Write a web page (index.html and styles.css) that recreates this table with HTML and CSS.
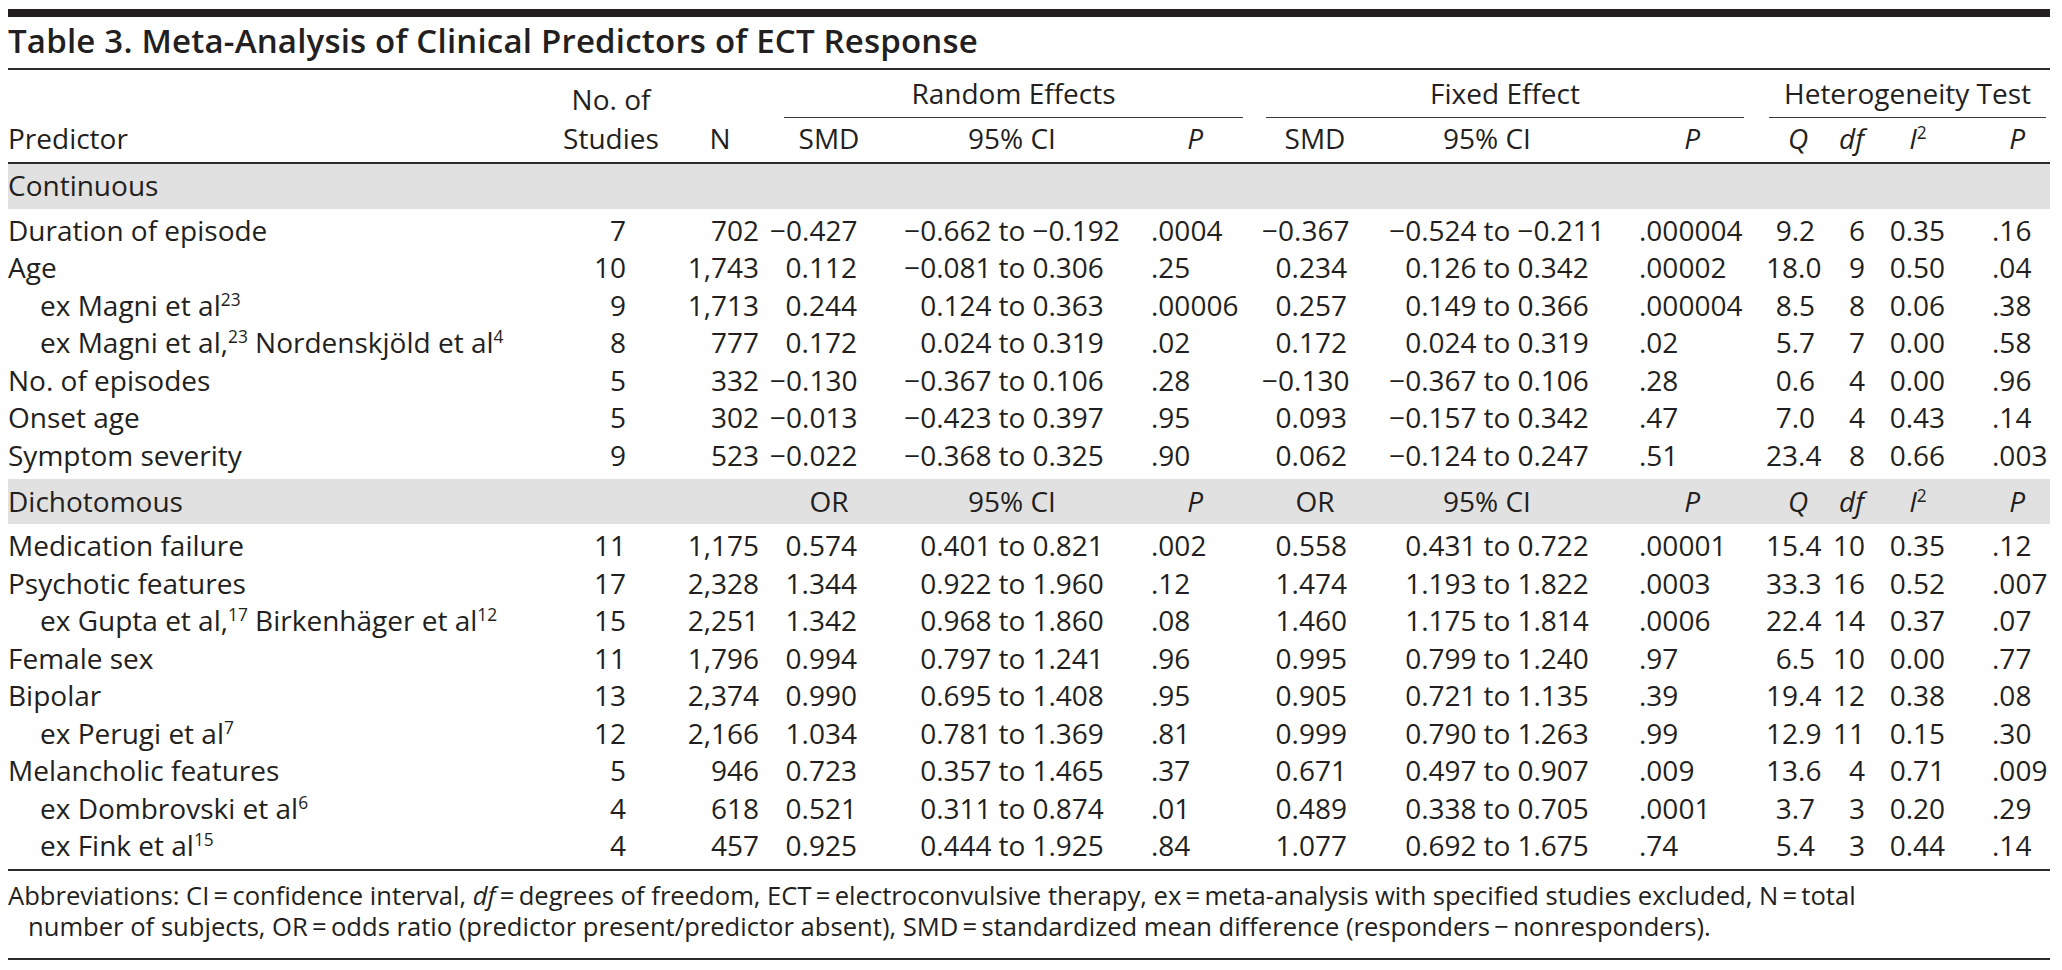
FILE: index.html
```html
<!DOCTYPE html>
<html lang="en">
<head>
<meta charset="utf-8">
<title>Table 3. Meta-Analysis of Clinical Predictors of ECT Response</title>
<link rel="stylesheet" href="styles.css">
</head>
<body>
<div class="page">
  <div class="bar"></div>
  <h1 class="title">Table 3. Meta-Analysis of Clinical Predictors of ECT Response</h1>
  <table class="meta">
    <colgroup>
      <col class="w-pred"><col class="w-stud"><col class="w-n">
      <col class="w-smd1"><col class="w-ci1"><col class="w-p1"><col class="w-gap1">
      <col class="w-smd2"><col class="w-ci2"><col class="w-p2"><col class="w-gap2">
      <col class="w-q"><col class="w-df"><col class="w-i2"><col class="w-p3">
    </colgroup>
    <thead>
      <tr class="h1">
        <th rowspan="2" class="hpred">Predictor</th>
        <th rowspan="2" class="hstud">No. of<br>Studies</th>
        <th rowspan="2" class="hn">N</th>
        <th colspan="3" class="grp"><div class="grp-l g-rand">Random Effects</div></th>
        <th rowspan="2" class="hgap"></th>
        <th colspan="3" class="grp"><div class="grp-l g-fix">Fixed Effect</div></th>
        <th rowspan="2" class="hgap"></th>
        <th colspan="4" class="grp"><div class="grp-l g-het">Heterogeneity Test</div></th>
      </tr>
      <tr class="h2">
        <th class="hc">SMD</th><th class="hc">95% CI</th><th class="hp1"><i>P</i></th>
        <th class="hc">SMD</th><th class="hc hci2">95% CI</th><th class="hp2"><i>P</i></th>
        <th class="hc"><i>Q</i></th><th class="hdf"><i>df</i></th><th class="hc"><i>I</i><sup>2</sup></th><th class="hp3"><i>P</i></th>
      </tr>
    </thead>
    <tbody>
      <tr class="band">
        <td class="pred">Continuous</td><td></td><td></td><td></td><td></td><td></td><td></td><td></td><td></td><td></td><td></td><td></td><td></td><td></td><td></td>
      </tr>
      <tr class="first">
        <td class="pred">Duration of episode</td><td class="st">7</td><td class="n">702</td>
        <td class="e1">−0.427</td><td class="ci"><div class="cig"><span class="lo">−0.662</span><span>to</span><span class="hi">−0.192</span></div></td><td class="p1">.0004</td><td></td>
        <td class="e2">−0.367</td><td class="ci ci2"><div class="cig"><span class="lo">−0.524</span><span>to</span><span class="hi">−0.211</span></div></td><td class="p2">.000004</td><td></td>
        <td class="q">9.2</td><td class="df">6</td><td class="i2">0.35</td><td class="p3">.16</td>
      </tr>
      <tr>
        <td class="pred">Age</td><td class="st">10</td><td class="n">1,743</td>
        <td class="e1">0.112</td><td class="ci"><div class="cig"><span class="lo">−0.081</span><span>to</span><span class="hi">0.306</span></div></td><td class="p1">.25</td><td></td>
        <td class="e2">0.234</td><td class="ci ci2"><div class="cig"><span class="lo">0.126</span><span>to</span><span class="hi">0.342</span></div></td><td class="p2">.00002</td><td></td>
        <td class="q">18.0</td><td class="df">9</td><td class="i2">0.50</td><td class="p3">.04</td>
      </tr>
      <tr>
        <td class="pred sub">ex Magni et al<sup>23</sup></td><td class="st">9</td><td class="n">1,713</td>
        <td class="e1">0.244</td><td class="ci"><div class="cig"><span class="lo">0.124</span><span>to</span><span class="hi">0.363</span></div></td><td class="p1">.00006</td><td></td>
        <td class="e2">0.257</td><td class="ci ci2"><div class="cig"><span class="lo">0.149</span><span>to</span><span class="hi">0.366</span></div></td><td class="p2">.000004</td><td></td>
        <td class="q">8.5</td><td class="df">8</td><td class="i2">0.06</td><td class="p3">.38</td>
      </tr>
      <tr>
        <td class="pred sub">ex Magni et al,<sup>23</sup> Nordenskjöld et al<sup>4</sup></td><td class="st">8</td><td class="n">777</td>
        <td class="e1">0.172</td><td class="ci"><div class="cig"><span class="lo">0.024</span><span>to</span><span class="hi">0.319</span></div></td><td class="p1">.02</td><td></td>
        <td class="e2">0.172</td><td class="ci ci2"><div class="cig"><span class="lo">0.024</span><span>to</span><span class="hi">0.319</span></div></td><td class="p2">.02</td><td></td>
        <td class="q">5.7</td><td class="df">7</td><td class="i2">0.00</td><td class="p3">.58</td>
      </tr>
      <tr>
        <td class="pred">No. of episodes</td><td class="st">5</td><td class="n">332</td>
        <td class="e1">−0.130</td><td class="ci"><div class="cig"><span class="lo">−0.367</span><span>to</span><span class="hi">0.106</span></div></td><td class="p1">.28</td><td></td>
        <td class="e2">−0.130</td><td class="ci ci2"><div class="cig"><span class="lo">−0.367</span><span>to</span><span class="hi">0.106</span></div></td><td class="p2">.28</td><td></td>
        <td class="q">0.6</td><td class="df">4</td><td class="i2">0.00</td><td class="p3">.96</td>
      </tr>
      <tr>
        <td class="pred">Onset age</td><td class="st">5</td><td class="n">302</td>
        <td class="e1">−0.013</td><td class="ci"><div class="cig"><span class="lo">−0.423</span><span>to</span><span class="hi">0.397</span></div></td><td class="p1">.95</td><td></td>
        <td class="e2">0.093</td><td class="ci ci2"><div class="cig"><span class="lo">−0.157</span><span>to</span><span class="hi">0.342</span></div></td><td class="p2">.47</td><td></td>
        <td class="q">7.0</td><td class="df">4</td><td class="i2">0.43</td><td class="p3">.14</td>
      </tr>
      <tr class="last">
        <td class="pred">Symptom severity</td><td class="st">9</td><td class="n">523</td>
        <td class="e1">−0.022</td><td class="ci"><div class="cig"><span class="lo">−0.368</span><span>to</span><span class="hi">0.325</span></div></td><td class="p1">.90</td><td></td>
        <td class="e2">0.062</td><td class="ci ci2"><div class="cig"><span class="lo">−0.124</span><span>to</span><span class="hi">0.247</span></div></td><td class="p2">.51</td><td></td>
        <td class="q">23.4</td><td class="df">8</td><td class="i2">0.66</td><td class="p3">.003</td>
      </tr>
      <tr class="band">
        <td class="pred">Dichotomous</td><td></td><td></td>
        <td class="hc">OR</td><td class="hc">95% CI</td><td class="hp1"><i>P</i></td><td></td>
        <td class="hc">OR</td><td class="hc hci2">95% CI</td><td class="hp2"><i>P</i></td><td></td>
        <td class="hc"><i>Q</i></td><td class="hdf"><i>df</i></td><td class="hc"><i>I</i><sup>2</sup></td><td class="hp3"><i>P</i></td>
      </tr>
      <tr class="first">
        <td class="pred">Medication failure</td><td class="st">11</td><td class="n">1,175</td>
        <td class="e1">0.574</td><td class="ci"><div class="cig"><span class="lo">0.401</span><span>to</span><span class="hi">0.821</span></div></td><td class="p1">.002</td><td></td>
        <td class="e2">0.558</td><td class="ci ci2"><div class="cig"><span class="lo">0.431</span><span>to</span><span class="hi">0.722</span></div></td><td class="p2">.00001</td><td></td>
        <td class="q">15.4</td><td class="df">10</td><td class="i2">0.35</td><td class="p3">.12</td>
      </tr>
      <tr>
        <td class="pred">Psychotic features</td><td class="st">17</td><td class="n">2,328</td>
        <td class="e1">1.344</td><td class="ci"><div class="cig"><span class="lo">0.922</span><span>to</span><span class="hi">1.960</span></div></td><td class="p1">.12</td><td></td>
        <td class="e2">1.474</td><td class="ci ci2"><div class="cig"><span class="lo">1.193</span><span>to</span><span class="hi">1.822</span></div></td><td class="p2">.0003</td><td></td>
        <td class="q">33.3</td><td class="df">16</td><td class="i2">0.52</td><td class="p3">.007</td>
      </tr>
      <tr>
        <td class="pred sub">ex Gupta et al,<sup>17</sup> Birkenhäger et al<sup>12</sup></td><td class="st">15</td><td class="n">2,251</td>
        <td class="e1">1.342</td><td class="ci"><div class="cig"><span class="lo">0.968</span><span>to</span><span class="hi">1.860</span></div></td><td class="p1">.08</td><td></td>
        <td class="e2">1.460</td><td class="ci ci2"><div class="cig"><span class="lo">1.175</span><span>to</span><span class="hi">1.814</span></div></td><td class="p2">.0006</td><td></td>
        <td class="q">22.4</td><td class="df">14</td><td class="i2">0.37</td><td class="p3">.07</td>
      </tr>
      <tr>
        <td class="pred">Female sex</td><td class="st">11</td><td class="n">1,796</td>
        <td class="e1">0.994</td><td class="ci"><div class="cig"><span class="lo">0.797</span><span>to</span><span class="hi">1.241</span></div></td><td class="p1">.96</td><td></td>
        <td class="e2">0.995</td><td class="ci ci2"><div class="cig"><span class="lo">0.799</span><span>to</span><span class="hi">1.240</span></div></td><td class="p2">.97</td><td></td>
        <td class="q">6.5</td><td class="df">10</td><td class="i2">0.00</td><td class="p3">.77</td>
      </tr>
      <tr>
        <td class="pred">Bipolar</td><td class="st">13</td><td class="n">2,374</td>
        <td class="e1">0.990</td><td class="ci"><div class="cig"><span class="lo">0.695</span><span>to</span><span class="hi">1.408</span></div></td><td class="p1">.95</td><td></td>
        <td class="e2">0.905</td><td class="ci ci2"><div class="cig"><span class="lo">0.721</span><span>to</span><span class="hi">1.135</span></div></td><td class="p2">.39</td><td></td>
        <td class="q">19.4</td><td class="df">12</td><td class="i2">0.38</td><td class="p3">.08</td>
      </tr>
      <tr>
        <td class="pred sub">ex Perugi et al<sup>7</sup></td><td class="st">12</td><td class="n">2,166</td>
        <td class="e1">1.034</td><td class="ci"><div class="cig"><span class="lo">0.781</span><span>to</span><span class="hi">1.369</span></div></td><td class="p1">.81</td><td></td>
        <td class="e2">0.999</td><td class="ci ci2"><div class="cig"><span class="lo">0.790</span><span>to</span><span class="hi">1.263</span></div></td><td class="p2">.99</td><td></td>
        <td class="q">12.9</td><td class="df">11</td><td class="i2">0.15</td><td class="p3">.30</td>
      </tr>
      <tr>
        <td class="pred">Melancholic features</td><td class="st">5</td><td class="n">946</td>
        <td class="e1">0.723</td><td class="ci"><div class="cig"><span class="lo">0.357</span><span>to</span><span class="hi">1.465</span></div></td><td class="p1">.37</td><td></td>
        <td class="e2">0.671</td><td class="ci ci2"><div class="cig"><span class="lo">0.497</span><span>to</span><span class="hi">0.907</span></div></td><td class="p2">.009</td><td></td>
        <td class="q">13.6</td><td class="df">4</td><td class="i2">0.71</td><td class="p3">.009</td>
      </tr>
      <tr>
        <td class="pred sub">ex Dombrovski et al<sup>6</sup></td><td class="st">4</td><td class="n">618</td>
        <td class="e1">0.521</td><td class="ci"><div class="cig"><span class="lo">0.311</span><span>to</span><span class="hi">0.874</span></div></td><td class="p1">.01</td><td></td>
        <td class="e2">0.489</td><td class="ci ci2"><div class="cig"><span class="lo">0.338</span><span>to</span><span class="hi">0.705</span></div></td><td class="p2">.0001</td><td></td>
        <td class="q">3.7</td><td class="df">3</td><td class="i2">0.20</td><td class="p3">.29</td>
      </tr>
      <tr class="end">
        <td class="pred sub">ex Fink et al<sup>15</sup></td><td class="st">4</td><td class="n">457</td>
        <td class="e1">0.925</td><td class="ci"><div class="cig"><span class="lo">0.444</span><span>to</span><span class="hi">1.925</span></div></td><td class="p1">.84</td><td></td>
        <td class="e2">1.077</td><td class="ci ci2"><div class="cig"><span class="lo">0.692</span><span>to</span><span class="hi">1.675</span></div></td><td class="p2">.74</td><td></td>
        <td class="q">5.4</td><td class="df">3</td><td class="i2">0.44</td><td class="p3">.14</td>
      </tr>
    </tbody>
  </table>
  <p class="foot">Abbreviations: CI&#8201;=&#8201;confidence interval, <i>df</i>&#8201;=&#8201;degrees of freedom, ECT&#8201;=&#8201;electroconvulsive therapy, ex&#8201;=&#8201;meta-analysis with specified studies excluded, N&#8201;=&#8201;total<br>number of subjects, OR&#8201;=&#8201;odds ratio (predictor present/predictor absent), SMD&#8201;=&#8201;standardized mean difference (responders&#8201;−&#8201;nonresponders).</p>
</div>
</body>
</html>
```
FILE: styles.css
```css
html, body {
  margin: 0;
  padding: 0;
  background: #ffffff;
}
body {
  padding: 9px 0 0 8px;
  font-family: "Open Sans", "Noto Sans", sans-serif;
  color: #231f20;
}
.page {
  width: 2042px;
}
.bar {
  height: 8px;
  background: #231f20;
}
.title {
  margin: 2px 0 5px 0;
  font-size: 33px;
  line-height: 44px;
  font-weight: 600;
  letter-spacing: 0.2px;
}
.meta {
  width: 2042px;
  table-layout: fixed;
  border-collapse: separate;
  border-spacing: 0;
  border-top: 2px solid #2b2b2b;
  border-bottom: 2px solid #2b2b2b;
  font-size: 28px;
  line-height: 37.5px;
}
.w-pred { width: 544px; }
.w-stud { width: 118px; }
.w-n { width: 100px; }
.w-smd1 { width: 118px; }
.w-ci1 { width: 248px; }
.w-p1 { width: 114px; }
.w-gap1 { width: 12px; }
.w-smd2 { width: 106px; }
.w-ci2 { width: 246px; }
.w-p2 { width: 144px; }
.w-gap2 { width: 8px; }
.w-q { width: 64px; }
.w-df { width: 48px; }
.w-i2 { width: 80px; }
.w-p3 { width: 92px; }

th, td {
  padding: 0;
  font-weight: 400;
  white-space: nowrap;
  vertical-align: baseline;
}
i { font-style: italic; }
sup {
  font-size: 0.62em;
  line-height: 0;
  vertical-align: 0.58em;
}

/* header */
.h1 th { padding-top: 5px; vertical-align: bottom; }
.h1 th[rowspan] {
  padding-bottom: 4.5px;
  border-bottom: 2px solid #2b2b2b;
}
.hpred { text-align: left; }
.hstud { text-align: center; line-height: 39px; padding-bottom: 3.5px !important; }
.hn { text-align: center; }
.grp { text-align: center; }
.grp-l {
  border-bottom: 1.5px solid #3a3a3a;
  padding-bottom: 4px;
}
.g-rand { margin: 0 7px 0 14px; }
.g-fix { margin: 0 14px 0 4px; }
.g-het { margin: 0 4px 0 3px; }
.h2 th {
  padding-top: 2px;
  padding-bottom: 4.5px;
  border-bottom: 2px solid #2b2b2b;
}
.hc { text-align: center; }
.hci2 { padding-right: 8px !important; }
.hp1 { text-align: right; padding-right: 47px !important; }
.hp2 { text-align: right; padding-right: 58px !important; }
.hp3 { text-align: right; padding-right: 25px !important; }
.hdf { text-align: right; padding-right: 14px !important; }

/* body */
.band td {
  background: #e1e1e1;
  padding-top: 3.75px;
  padding-bottom: 3.75px;
}
.first td { padding-top: 3px; }
.last td { padding-bottom: 5px; }
.end td { padding-bottom: 4px; }
.pred { text-align: left; }
.pred.sub { padding-left: 32px; }
.st { text-align: right; padding-right: 44px; }
.n { text-align: right; padding-right: 11px; }
.e1 { text-align: right; padding-right: 31px; }
.e2 { text-align: right; padding-right: 21px; }
.p1 { text-align: left; padding-left: 15px; }
.p2 { text-align: left; padding-left: 25px; }
.q { text-align: right; padding-right: 15px; }
.df { text-align: right; padding-right: 13px; }
.i2 { text-align: right; padding-right: 13px; }
.p3 { text-align: left; padding-left: 34px; }
.ci2 { padding-left: 12px; }
.cig {
  display: grid;
  grid-template-columns: 1fr auto 1fr;
  column-gap: 7px;
}
.cig .lo { text-align: right; }
.cig .hi { text-align: left; }

/* footnote */
.foot {
  margin: 0;
  padding: 9px 0 15px 20px;
  text-indent: -20px;
  font-size: 25.6px;
  line-height: 31.5px;
  border-bottom: 2px solid #2b2b2b;
}
```
